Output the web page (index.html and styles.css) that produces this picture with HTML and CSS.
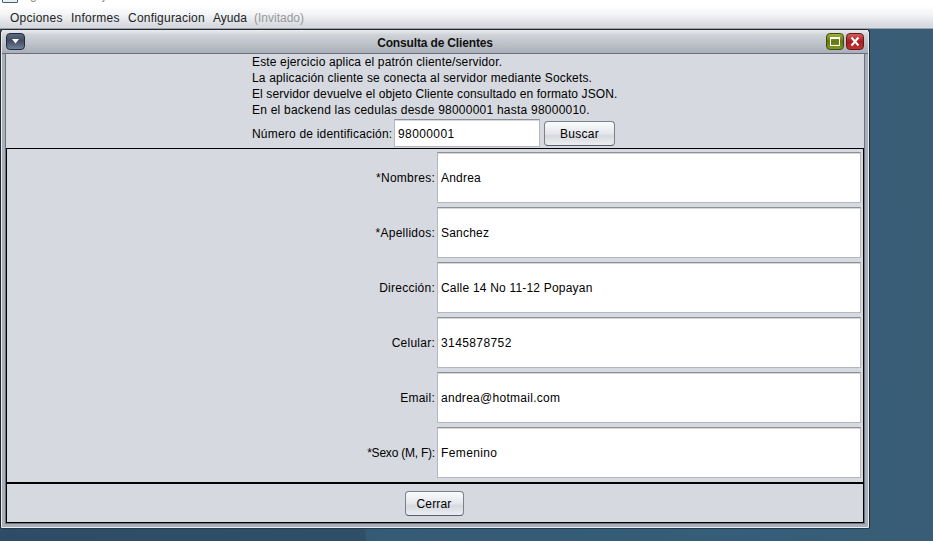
FILE: index.html
```html
<!DOCTYPE html>
<html lang="es">
<head>
<meta charset="utf-8">
<title>Consulta de Clientes</title>
<link rel="stylesheet" href="styles.css">
</head>
<body>
<header class="appbar"><i class="appicon"></i><span class="apptitle">Agencia de Viajes</span></header>
<nav class="menu"><span class="m1">Opciones</span><span class="m2">Informes</span><span class="m3">Configuracion</span><span class="m4">Ayuda</span><span class="guest">(Invitado)</span></nav>
<main class="desktop">
<section class="window">
<div class="titlebar">
<span class="tb menu-btn"><svg width="19" height="17" viewBox="0 0 19 17"><path d="M6 6h7l-3.5 4.5z" fill="#fff"/></svg></span>
<h1>Consulta de Clientes</h1>
<span class="tb max"><svg width="18" height="17" viewBox="0 0 18 17"><path d="M4 4h10v9H4zM5 6v6h8V6z" fill="#fff" fill-rule="evenodd"/></svg></span>
<span class="tb close"><svg width="18" height="17" viewBox="0 0 18 17"><path d="M5.5 4.5l7 8M12.5 4.5l-7 8" stroke="#fff" stroke-width="2"/></svg></span>
</div>
<div class="content">
<div class="search">
<p class="l1">Este ejercicio aplica el patrón cliente/servidor.</p>
<p class="l2">La aplicación cliente se conecta al servidor mediante Sockets.</p>
<p class="l3">El servidor devuelve el objeto Cliente consultado en formato JSON.</p>
<p class="l4">En el backend las cedulas desde 98000001 hasta 98000010.</p>
<div class="row"><span class="idl">Número de identificación:</span><div class="field idf digits"><span>98000001</span></div><button class="buscar">Buscar</button></div>
</div>
<div class="form">
<span class="lab">*Nombres:</span><div class="field"><span>Andrea</span></div>
<span class="lab">*Apellidos:</span><div class="field"><span>Sanchez</span></div>
<span class="lab">Dirección:</span><div class="field"><span>Calle 14 No 11-12 Popayan</span></div>
<span class="lab">Celular:</span><div class="field digits"><span>3145878752</span></div>
<span class="lab">Email:</span><div class="field mail"><span>andrea@hotmail.com</span></div>
<span class="lab tight">*Sexo (M, F):</span><div class="field wide"><span>Femenino</span></div>
</div>
<div class="footer"><button class="cerrar">Cerrar</button></div>
</div>
</section>
</main>
</body>
</html>
```
FILE: styles.css
```css
* { box-sizing: border-box; margin: 0; }
body { width: 933px; height: 541px; overflow: hidden; background: #fff; font: 12px/16px "Liberation Sans", Arial, sans-serif; color: #000; white-space: nowrap; }
.appbar { height: 6px; overflow: hidden; display: flex; align-items: flex-end; padding-bottom: 3px; color: #888; }
.appicon { width: 16px; height: 16px; border: 1px solid #47616f; background: #e6eff4; margin: 0 0 0 2px; border-radius: 1px; }
.apptitle { margin-left: 4px; margin-bottom: 0; }
.menu { height: 23px; display: flex; padding: 4px 0 0 10px; background: linear-gradient(#fff, #f2f3f5 40%, #d6d9df 90%); border-bottom: 1px solid #9ba1aa; color: #222; }
.m1 { width: 61px; letter-spacing: .25px; }
.m2 { width: 57px; letter-spacing: .25px; }
.m3 { width: 85px; letter-spacing: .22px; }
.m4 { width: 41px; }
.guest { color: #989898; }
.desktop { height: 512px; background: linear-gradient(85deg, #2e4c67 0, #2f4f69 37.4%, #345a75 37.5%, #365d79 80%, #3a5d75 100%); }
.window { width: 870px; height: 500px; padding: 0 4px 4px; border: 1px solid #24272c; border-bottom-color: #243b4c; border-radius: 4px 4px 2px 2px; box-shadow: inset 1px 1px #e9ebef, inset -1px -1px #e9ebef; background: #a9afbb; }
.titlebar { height: 24px; margin: 0 -3px; padding: 3px 4px 0 4px; display: flex; align-items: flex-start; background: linear-gradient(#eceef1, #d1d4d9 20%, #a9afb9); border-bottom: 1px solid #696e79; }
h1 { flex: 1; font-size: 12px; line-height: 20px; text-align: center; padding-left: 19px; letter-spacing: -.15px; color: #111; }
.tb { height: 17px; border: 1px solid #222b38; border-radius: 4px; }
.tb svg { display: block; margin: -1px; }
.menu-btn { width: 19px; background: linear-gradient(#5c687b, #414c60 45%, #718096); }
.max { width: 18px; border-color: #3c4b0c; background: linear-gradient(#9fb13c, #62770f 50%, #84992b); margin-right: 2px; }
.close { width: 18px; border-color: #68161c; background: linear-gradient(#d2605e, #a81e20 50%, #bf3431); }
.content { border: 1px solid #6b717d; border-top: 0; height: 470px; background: #d6d9df; display: flex; flex-direction: column; }
.search { height: 94px; padding-left: 246px; }
.l1 { letter-spacing: .15px; }
.l2 { letter-spacing: .16px; }
.l3 { letter-spacing: .11px; }
.l4 { letter-spacing: .23px; }
.row { display: flex; align-items: center; height: 28px; margin-top: 1px; }
.idl { width: 142px; letter-spacing: .2px; padding-top: 1px; }
.field { background: #fff; border: 1px solid #b4b7bd; border-top: 1px solid #8d9096; box-shadow: inset 0 1px #d7d8da; display: flex; align-items: center; padding-left: 3px; letter-spacing: .2px; }
.idf { width: 146px; height: 28px; }
.idf span { padding-top: 1px; }
.digits { letter-spacing: .4px; }
.mail { letter-spacing: .28px; }
.wide { letter-spacing: .38px; }
button { font: inherit; letter-spacing: .3px; padding: 0; border: 1px solid #7b808b; border-bottom-color: #555e6f; border-radius: 4px; background: linear-gradient(#fafbfc, #e5e7eb 50%, #d6d9df 60%, #eceef1); }
.buscar { width: 71px; height: 25px; margin-left: 4px; padding-top: 1px; }
.form { height: 335px; border: 1px solid #000; padding: 3px 2px 3px 0; display: grid; grid-template-columns: 428px 1fr; grid-auto-rows: 51px; row-gap: 4px; column-gap: 2px; align-items: stretch; }
.lab { text-align: right; align-self: center; letter-spacing: .25px; }
.tight { letter-spacing: -.22px; }
.footer { flex: 1; border: 1px solid #000; display: flex; justify-content: center; padding: 7px 2px 0 0; }
.cerrar { width: 59px; height: 25px; letter-spacing: .15px; }
```
